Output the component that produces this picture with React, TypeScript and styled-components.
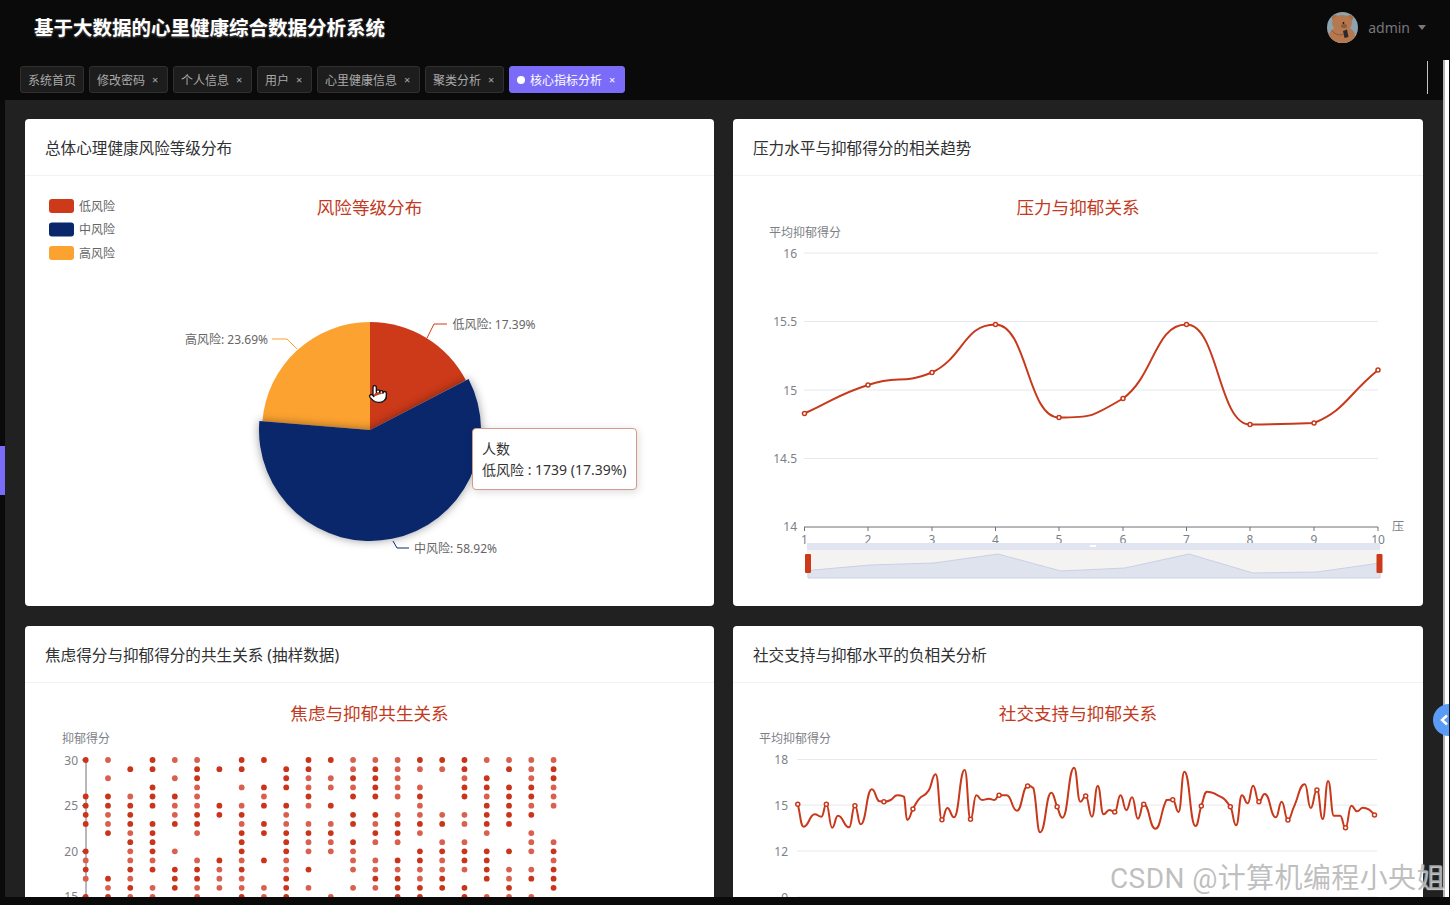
import React from 'react';
import styled, { createGlobalStyle } from 'styled-components';
import { Pointer } from 'lucide-react';

const FONT = '"Noto Sans", "Noto Sans CJK SC", sans-serif';

const GlobalStyle = createGlobalStyle`
  html, body {
    margin: 0;
    padding: 0;
    background: #0a0a0a;
    font-family: ${FONT};
  }
`;

const Shell = styled.div`
  position: relative;
  width: 1450px;
  height: 905px;
  overflow: hidden;
  display: flex;
  flex-direction: column;
  box-sizing: border-box;
  padding: 0 1px 8px 0;
  background: #0a0a0a;
`;

const Header = styled.header`
  height: 60px;
  flex: none;
  display: flex;
  align-items: center;
  justify-content: space-between;
  padding: 0 23px 8px 34px;
  box-sizing: border-box;
`;

const AppTitle = styled.h1`
  margin: 0;
  font-size: 19.5px;
  font-weight: 700;
  color: #fff;
  text-shadow: 0 1px 2px rgba(255, 255, 255, 0.35);
`;

const UserBox = styled.div`
  display: flex;
  align-items: center;
  gap: 10px;
  margin-top: 2px;
  color: #77777d;
  font-size: 14px;
`;

const Caret = styled.span`
  width: 0;
  height: 0;
  margin-left: -2px;
  border-left: 4.5px solid transparent;
  border-right: 4.5px solid transparent;
  border-top: 5px solid #77777d;
`;

const Body = styled.div`
  flex: 1;
  min-height: 0;
  display: flex;
`;

const Column = styled.div`
  flex: 1;
  min-width: 0;
  display: flex;
  flex-direction: column;
`;

const ScrollStrip = styled.div`
  flex: none;
  width: 6px;
  box-sizing: border-box;
  background: #fff;
  border-left: 2px solid #b4b4b4;
`;

const TabBar = styled.nav`
  height: 40px;
  flex: none;
  display: flex;
  align-items: flex-start;
  gap: 5px;
  padding: 6px 15px 0 20px;
  box-sizing: border-box;
`;

const Tab = styled.div<{ $active?: boolean }>`
  height: 27px;
  display: flex;
  align-items: center;
  padding: 0 7px;
  box-sizing: border-box;
  border-radius: 3px;
  font-size: 12px;
  color: ${p => (p.$active ? '#fff' : '#a9a9a9')};
  background: ${p => (p.$active ? '#7a6cf9' : '#1d1d1d')};
  border: 1px solid ${p => (p.$active ? '#7a6cf9' : '#303030')};
`;

const TabDot = styled.span`
  width: 8px;
  height: 8px;
  margin-right: 5px;
  border-radius: 50%;
  background: #fff;
`;

const TabClose = styled.span`
  width: 10px;
  margin-left: 5px;
  text-align: center;
  font-size: 11px;
  line-height: 1;
`;

const TabDivider = styled.div`
  width: 1px;
  height: 33px;
  margin: -5px 0 0 auto;
  background: #c4c4c4;
`;

const ContentRow = styled.div`
  flex: 1;
  min-height: 0;
  display: flex;
`;

const Rail = styled.div`
  position: relative;
  flex: none;
  width: 5px;
`;

const RailHandle = styled.div`
  position: absolute;
  top: 346px;
  left: 0;
  width: 5px;
  height: 49px;
  background: #7a6cf9;
`;

const Main = styled.main`
  flex: 1;
  min-width: 0;
  overflow: hidden;
  background: #212121;
  padding: 19px 20px;
  box-sizing: border-box;
  display: grid;
  grid-template-columns: 689px 690px;
  grid-auto-rows: 487px;
  gap: 20px 19px;
`;

const Card = styled.section`
  position: relative;
  background: #fff;
  border-radius: 4px;
  overflow: hidden;
`;

const CardHead = styled.div`
  height: 57px;
  box-sizing: border-box;
  padding-left: 20px;
  display: flex;
  align-items: center;
  font-size: 15.6px;
  color: #303133;
  border-bottom: 1px solid #f1f2f5;
`;

const ChartSvg = styled.svg`
  display: block;
  width: 100%;
  height: 430px;
`;

const ChartTitle = styled.text`
  font-size: 17.6px;
  fill: #c23a22;
  text-anchor: middle;
  dominant-baseline: central;
`;

const AxisText = styled.text<{ $end?: boolean }>`
  font-size: 12px;
  fill: #7d7f87;
  text-anchor: ${p => (p.$end ? 'end' : 'start')};
  dominant-baseline: central;
`;

const TickText = styled(AxisText)`
  text-anchor: middle;
`;

const PieText = styled.text<{ $end?: boolean }>`
  font-size: 12px;
  fill: #666;
  text-anchor: ${p => (p.$end ? 'end' : 'start')};
  dominant-baseline: central;
`;

const HoverSlice = styled.path`
  filter: drop-shadow(0 0 5px rgba(0, 0, 0, 0.4));
`;

const Tooltip = styled.div`
  position: absolute;
  left: 447px;
  top: 309px;
  width: 165px;
  height: 62px;
  box-sizing: border-box;
  padding: 9px 9px;
  background: #fff;
  border: 1px solid #d49a8c;
  border-radius: 4px;
  box-shadow: 1px 2px 8px rgba(0, 0, 0, 0.15);
  font-size: 14px;
  line-height: 21px;
  color: #333;
  white-space: nowrap;
`;

const Watermark = styled.div`
  position: absolute;
  left: 1110px;
  top: 858px;
  font-family: Roboto, "Noto Sans CJK SC", sans-serif;
  font-size: 28px;
  line-height: 42px;
  letter-spacing: 0.4px;
  white-space: nowrap;
  color: rgba(170, 170, 170, 0.75);
  text-shadow: 1px 1px 1px rgba(255, 255, 255, 0.8);
`;

const SideBubble = styled.div`
  position: absolute;
  left: 1433px;
  top: 704px;
  width: 16px;
  height: 32px;
  display: flex;
  align-items: center;
  justify-content: flex-end;
  border-radius: 16px 0 0 16px;
  background: #5b9bf8;
`;

type Pt = [number, number];

const clamp = (v: number, a: number, b: number) => Math.min(Math.max(v, Math.min(a, b)), Math.max(a, b));

// echarts-like smooth line: flat at extremes, handles at half a segment, never past the segment's y range
const smoothPath = (pts: Pt[], k = 0.5) => {
  const slope = (i: number) => {
    const cur = pts[i];
    const prev = pts[i - 1] || cur;
    const next = pts[i + 1] || cur;
    if (i > 0 && i < pts.length - 1 && (cur[1] - prev[1]) * (next[1] - cur[1]) <= 0) return 0;
    return (next[1] - prev[1]) / (next[0] - prev[0]);
  };
  let d = `M${pts[0][0]} ${pts[0][1]}`;
  for (let i = 0; i < pts.length - 1; i++) {
    const [x0, y0] = pts[i];
    const [x1, y1] = pts[i + 1];
    const dx = (x1 - x0) * k;
    const c0 = clamp(y0 + slope(i) * dx, y0, y1);
    const c1 = clamp(y1 - slope(i + 1) * dx, y0, y1);
    d += ` C${x0 + dx} ${c0} ${x1 - dx} ${c1} ${x1} ${y1}`;
  }
  return d;
};

const sector = (cx: number, cy: number, r: number, from: number, to: number) => {
  const at = (a: number) => {
    const rad = (a * Math.PI) / 180;
    return `${cx + r * Math.sin(rad)} ${cy - r * Math.cos(rad)}`;
  };
  return `M${cx} ${cy} L${at(from)} A${r} ${r} 0 ${to - from > 180 ? 1 : 0} 1 ${at(to)} Z`;
};

const RED = '#c8391b';
const NAVY = '#0a276b';
const ORANGE = '#fca231';

const tabs = ['系统首页', '修改密码', '个人信息', '用户', '心里健康信息', '聚类分析', '核心指标分析'];

const legend = [
  { name: '低风险', color: '#cc3a19', y: 206 },
  { name: '中风险', color: NAVY, y: 229.5 },
  { name: '高风险', color: ORANGE, y: 253 },
];

const PieChart = () => (
  <ChartSvg viewBox="25 176 689 430">
    <ChartTitle x={369.5} y={207}>风险等级分布</ChartTitle>
    {legend.map(l => (
      <g key={l.name}>
        <rect x={49} y={l.y - 7} width={25} height={14} rx={3} fill={l.color} />
        <PieText x={79} y={l.y}>{l.name}</PieText>
      </g>
    ))}
    <path d={sector(370, 430, 108, 0, 62.6)} fill="#cc3a19" />
    <path d={sector(370, 430, 108, 274.7, 360)} fill={ORANGE} />
    <HoverSlice d={sector(370, 430, 111, 62.6, 274.7)} fill={NAVY} />
    <polyline points="427,338 434,324 447,324" fill="none" stroke="#cc3a19" />
    <polyline points="297,349 287,339 272,339" fill="none" stroke={ORANGE} />
    <polyline points="393,541 397,548 409,548" fill="none" stroke={NAVY} />
    <PieText x={452.5} y={324}>低风险: 17.39%</PieText>
    <PieText x={268} y={339} $end>高风险: 23.69%</PieText>
    <PieText x={414} y={548}>中风险: 58.92%</PieText>
    <Pointer x={368} y={384} width={20} height={20} fill="#fff" stroke="#111" strokeWidth={1.6} />
  </ChartSvg>
);

const stressPts: Pt[] = [
  [804.5, 413.5], [868, 385], [932, 372.5], [995.5, 324.5], [1059, 417.5],
  [1123, 398.5], [1186.5, 324.5], [1250, 424.5], [1314, 423], [1378, 370],
];
const sliderPts: Pt[] = [
  [808, 570.5], [870, 565], [934, 563], [998, 554], [1061, 571],
  [1125, 568], [1189, 554], [1253, 573], [1317, 572], [1380, 563],
];

const StressChart = () => (
  <ChartSvg viewBox="733 176 690 430">
    <ChartTitle x={1078} y={207}>压力与抑郁关系</ChartTitle>
    <AxisText x={769} y={232}>平均抑郁得分</AxisText>
    {[['16', 253], ['15.5', 321.5], ['15', 390], ['14.5', 458.5]].map(([t, y]) => (
      <g key={t}>
        <line x1={804} x2={1378} y1={y} y2={y} stroke="#e6e8f0" />
        <AxisText x={797} y={y} $end>{t}</AxisText>
      </g>
    ))}
    <AxisText x={797} y={526} $end>14</AxisText>
    <line x1={804} x2={1378} y1={527} y2={527} stroke="#6e7079" />
    {stressPts.map((p, i) => (
      <g key={i}>
        <line x1={p[0]} x2={p[0]} y1={527} y2={531} stroke="#6e7079" />
        <TickText x={p[0]} y={539}>{i + 1}</TickText>
      </g>
    ))}
    <AxisText x={1392} y={526}>压</AxisText>
    <path d={smoothPath(stressPts)} fill="none" stroke={RED} strokeWidth={2} />
    {stressPts.map((p, i) => (
      <circle key={i} cx={p[0]} cy={p[1]} r={2} fill="#fff" stroke={RED} strokeWidth={1.5} />
    ))}
    <rect x={807} y={543} width={573} height={7} fill="#e0e5f1" />
    <rect x={1090} y={545} width={6} height={2} fill="#fff" />
    <rect x={807} y={550} width={573} height={28} fill="#f4f3f2" />
    <path
      d={`M808 578 L${sliderPts.map(p => p.join(' ')).join(' L')} L1380 578 Z`}
      fill="#dfe3ee"
      stroke="#c9d1e6"
    />
    <rect x={805} y={554} width={6} height={19} rx={1} fill="#cc3a19" />
    <rect x={1376.5} y={554} width={6} height={19} rx={1} fill="#cc3a19" />
  </ChartSvg>
);

// one string per score from 30 down to 15, one char per x column: 2 overlapping dots, 1 single dot
const scatterRows = [
  '21.211.22.221112221111',
  '..22.222.22.121112.212',
  '.1..12...211221..12.12',
  '...2.1.122111211.22221',
  '221221..1.2.2212.21221',
  '222211212212...1..2211',
  '212.1222.1..221111222.',
  '212222.1211121222122..',
  '.212.1.22222.221..1.1.',
  '..22...2.211211.11..11',
  '2.121..2.2111..2222212',
  '1.11.12121..1122122..1',
  '2.222212.12.1111112112',
  '121.2211.2...2212.2122',
  '.1212111121.112222.2.2',
  '2211.1.212.1..22.2111.',
];

const ScatterChart = () => (
  <ChartSvg viewBox="25 683 689 430">
    <ChartTitle x={369.5} y={713}>焦虑与抑郁共生关系</ChartTitle>
    <AxisText x={62} y={738}>抑郁得分</AxisText>
    <line x1={86} x2={86} y1={760} y2={900} stroke="#6e7079" />
    {[30, 25, 20, 15].map(v => {
      const y = 760 + (30 - v) * 9.13;
      return (
        <g key={v}>
          <line x1={82} x2={86} y1={y} y2={y} stroke="#6e7079" />
          <AxisText x={78} y={y} $end>{v}</AxisText>
        </g>
      );
    })}
    {scatterRows.map((row, r) =>
      row.split('').map((c, i) =>
        c === '.' ? null : (
          <circle
            key={`${r}-${i}`}
            cx={85.7 + i * 22.28}
            cy={760 + r * 9.13}
            r={2.9}
            fill={c === '2' ? '#c9341a' : '#d9604f'}
          />
        ),
      ),
    )}
  </ChartSvg>
);

// traced from the picture, in 1/0.4464 px on x and 1/3 px on y from (750, 720)
const socialTrace: Pt[] = [
  [107, 253], [120, 320], [145, 283], [160, 290], [171, 253], [184, 323], [197, 287], [222, 322], [235, 257],
  [248, 313], [273, 208], [288, 243], [300, 245], [315, 240], [330, 226], [345, 230], [352, 300], [365, 267],
  [378, 238], [400, 212], [416, 163], [430, 299], [442, 264], [457, 292], [481, 150], [494, 298], [507, 226],
  [520, 240], [535, 236], [548, 240], [558, 226], [575, 226], [598, 272], [622, 198], [635, 205], [650, 337],
  [675, 218], [688, 260], [700, 293], [726, 143], [740, 245], [752, 228], [766, 290], [779, 198], [792, 283],
  [805, 270], [817, 276], [830, 226], [843, 270], [856, 232], [869, 296], [882, 253], [908, 326], [933, 240],
  [947, 239], [960, 276], [973, 155], [998, 318], [1011, 258], [1024, 215], [1040, 220], [1076, 260], [1089, 316],
  [1102, 226], [1115, 250], [1127, 197], [1140, 245], [1153, 222], [1178, 292], [1191, 245], [1205, 300], [1218, 262],
  [1243, 193], [1256, 264], [1270, 210], [1283, 297], [1295, 183], [1308, 287], [1322, 287], [1334, 323], [1347, 257],
  [1360, 274], [1373, 263], [1386, 268], [1399, 285],
];
const socialMarkers = [107, 171, 235, 300, 365, 430, 494, 558, 622, 688, 752, 817, 882, 947, 1011, 1076, 1140, 1205, 1270, 1334, 1399];
const toPage = ([x, y]: Pt): Pt => [750 + x * 0.4464, 720 + y / 3];
const socialPts = socialTrace.map(toPage);

const SocialChart = () => (
  <ChartSvg viewBox="733 683 690 430">
    <ChartTitle x={1078} y={713}>社交支持与抑郁关系</ChartTitle>
    <AxisText x={759} y={738}>平均抑郁得分</AxisText>
    {[['18', 759.5], ['15', 805], ['12', 851], ['9', 897]].map(([t, y]) => (
      <g key={t}>
        <line x1={797} x2={1377} y1={y} y2={y} stroke="#e6e8f0" />
        <AxisText x={788} y={y} $end>{t}</AxisText>
      </g>
    ))}
    <path d={smoothPath(socialPts)} fill="none" stroke={RED} strokeWidth={2} />
    {socialTrace
      .filter(p => socialMarkers.includes(p[0]))
      .map(toPage)
      .map(p => (
        <circle key={p[0]} cx={p[0]} cy={p[1]} r={2} fill="#fff" stroke={RED} strokeWidth={1.5} />
      ))}
  </ChartSvg>
);

const BearAvatar = () => (
  <svg width="31" height="31" viewBox="0 0 31 31">
    <defs>
      <clipPath id="avatar-clip">
        <circle cx="15.5" cy="15.5" r="15.5" />
      </clipPath>
    </defs>
    <g clipPath="url(#avatar-clip)">
      <rect width="31" height="31" fill="#8ea3b0" />
      <rect y="22" width="31" height="9" fill="#b9b18c" />
      <circle cx="8" cy="6" r="3" fill="#a96f49" />
      <circle cx="23" cy="6" r="3" fill="#a96f49" />
      <ellipse cx="15" cy="11" rx="10" ry="8" fill="#b5784f" />
      <ellipse cx="15" cy="24" rx="13" ry="10" fill="#b5784f" />
      <ellipse cx="17" cy="14" rx="3" ry="2" fill="#8d5a3a" />
      <circle cx="16.5" cy="11" r="0.9" fill="#1e1410" />
      <path d="M16 19 L20 17.5 L21.5 25 L17.5 26 Z" fill="#2c2a2c" />
      <path d="M5 19 Q11 25 17 22" fill="none" stroke="#8d5a3a" />
    </g>
  </svg>
);

export default function App() {
  return (
    <Shell>
      <GlobalStyle />
      <Header>
        <AppTitle>基于大数据的心里健康综合数据分析系统</AppTitle>
        <UserBox>
          <BearAvatar />
          admin
          <Caret />
        </UserBox>
      </Header>
      <Body>
        <Column>
          <TabBar>
            {tabs.map((t, i) => (
              <Tab key={t} $active={i === tabs.length - 1}>
                {i === tabs.length - 1 && <TabDot />}
                {t}
                {i > 0 && <TabClose>×</TabClose>}
              </Tab>
            ))}
            <TabDivider />
          </TabBar>
          <ContentRow>
            <Rail>
              <RailHandle />
            </Rail>
            <Main>
              <Card>
                <CardHead>总体心理健康风险等级分布</CardHead>
                <PieChart />
                <Tooltip>
                  人数
                  <br />
                  低风险 : 1739 (17.39%)
                </Tooltip>
              </Card>
              <Card>
                <CardHead>压力水平与抑郁得分的相关趋势</CardHead>
                <StressChart />
              </Card>
              <Card>
                <CardHead>焦虑得分与抑郁得分的共生关系 (抽样数据)</CardHead>
                <ScatterChart />
              </Card>
              <Card>
                <CardHead>社交支持与抑郁水平的负相关分析</CardHead>
                <SocialChart />
              </Card>
            </Main>
          </ContentRow>
        </Column>
        <ScrollStrip />
      </Body>
      <SideBubble>
        <svg width="10" height="12" viewBox="0 0 10 12">
          <path d="M8 1.5 L3 6 L8 10.5" fill="none" stroke="#fff" strokeWidth="2.4" />
        </svg>
      </SideBubble>
      <Watermark>CSDN @计算机编程小央姐</Watermark>
    </Shell>
  );
}
